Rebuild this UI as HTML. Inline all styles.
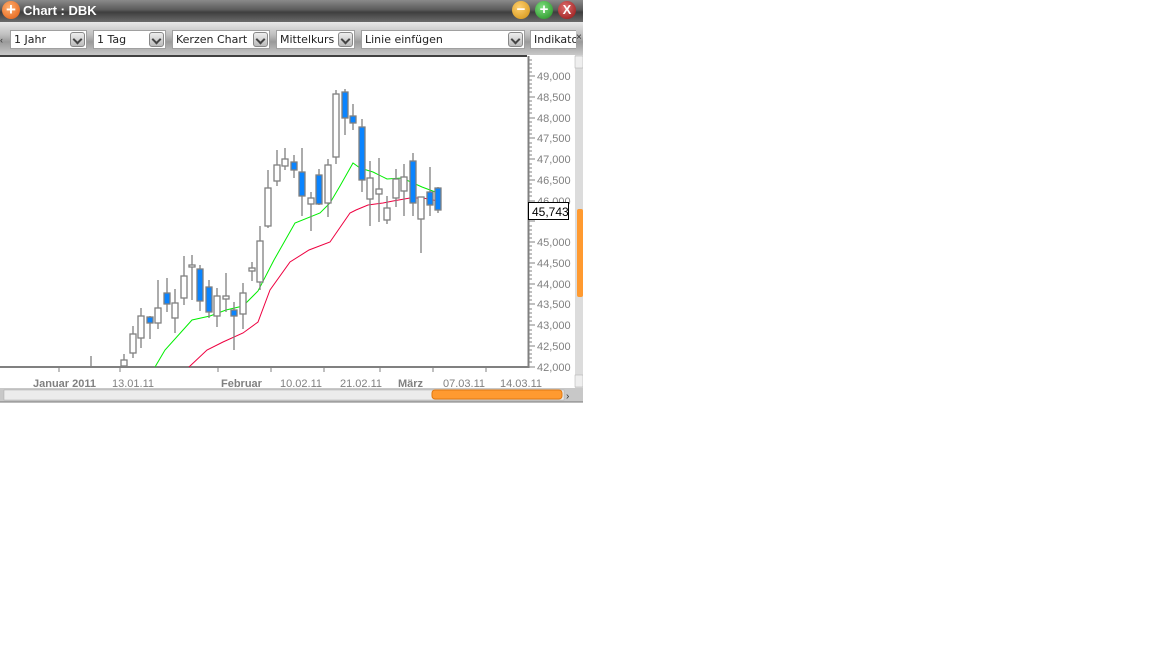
<!DOCTYPE html>
<html><head><meta charset="utf-8"><style>
*{margin:0;padding:0;box-sizing:border-box}
body{width:1152px;height:648px;background:#fff;position:relative;overflow:hidden;font-family:"Liberation Sans",sans-serif}
.title{position:absolute;left:0;top:0;width:583px;height:22px;background:linear-gradient(#8a8a8a,#5a5a5a 45%,#3e3e3e 55%,#6a6a6a);}
.title span{position:absolute;left:23px;top:3px;color:#fff;font-weight:bold;font-size:13px}
.tb{position:absolute;left:0;top:22px;width:583px;height:33px;background:linear-gradient(#e8e8e8,#bdbdbd 40%,#9a9a9a 60%,#c8c8c8);}
.sel{position:absolute;top:8px;height:19px;background:#fff;border:1px solid #a0a0a0;font-family:"DejaVu Sans",sans-serif;font-size:11px;padding:2px 0 0 3px;color:#222;overflow:hidden;white-space:nowrap}
.sel b{position:absolute;right:1px;top:1px;width:15px;height:15px;border:1px solid #888;border-radius:3px;background:linear-gradient(#eee,#bbb);font-weight:normal}
.sel b:after{content:"";position:absolute;left:3px;top:3px;width:5px;height:5px;border-right:2px solid #444;border-bottom:2px solid #444;transform:rotate(45deg)}
.btn{position:absolute;top:1px;width:18px;height:18px;border-radius:50%;color:#fff;font-weight:bold;font-size:15px;line-height:17px;text-align:center}
</style></head><body>
<div class="title">
<div class="btn" style="left:2px;background:radial-gradient(circle at 40% 35%,#ffb070,#e05a10);font-size:17px">+</div>
<span>Chart : DBK</span>
<div class="btn" style="left:512px;background:radial-gradient(circle at 40% 35%,#ffd070,#d09010)">−</div>
<div class="btn" style="left:535px;background:radial-gradient(circle at 40% 35%,#7ee07e,#208a20)">+</div>
<div class="btn" style="left:558px;background:radial-gradient(circle at 40% 35%,#e07070,#901010);font-size:13px">X</div>
</div>
<div class="tb">
<div style="position:absolute;left:0;top:13px;font-size:9px;color:#333">‹</div>
<div class="sel" style="left:10px;width:77px">1 Jahr<b></b></div>
<div class="sel" style="left:93px;width:73px">1 Tag<b></b></div>
<div class="sel" style="left:172px;width:98px">Kerzen Chart<b></b></div>
<div class="sel" style="left:276px;width:79px">Mittelkurs<b></b></div>
<div class="sel" style="left:361px;width:164px">Linie einfügen<b></b></div>
<div class="sel" style="left:530px;width:46px;border-right:none">Indikatoren</div>
<div style="position:absolute;left:576px;top:10px;font-size:10px;color:#333">×</div>
</div>
<svg style="position:absolute;left:0;top:55px" width="583" height="348" viewBox="0 55 583 348" font-family="Liberation Sans, sans-serif">
<line x1="0" y1="56" x2="527" y2="56" stroke="#000" stroke-width="1.5"/>
<line x1="0" y1="367" x2="529" y2="367" stroke="#808080" stroke-width="2"/>
<line x1="528.5" y1="56" x2="528.5" y2="368" stroke="#808080" stroke-width="2"/>
<g stroke="#808080" stroke-width="1">
<path d="M529 60h3M529 64h3M529 68h3M529 72h3M529 80h3M529 84h3M529 88h3M529 92h3M529 101h3M529 105h3M529 109h3M529 113h3M529 122h3M529 126h3M529 130h3M529 134h3M529 143h3M529 147h3M529 151h3M529 155h3M529 164h3M529 168h3M529 172h3M529 176h3M529 184h3M529 188h3M529 192h3M529 196h3M529 205h3M529 209h3M529 213h3M529 217h3M529 226h3M529 230h3M529 234h3M529 238h3M529 246h3M529 250h3M529 254h3M529 258h3M529 267h3M529 271h3M529 275h3M529 279h3M529 288h3M529 292h3M529 296h3M529 300h3M529 309h3M529 313h3M529 317h3M529 321h3M529 330h3M529 334h3M529 338h3M529 342h3M529 350h3M529 354h3M529 358h3M529 362h3"/>
<path d="M529 76h6M529 97h6M529 118h6M529 138h6M529 159h6M529 180h6M529 201h6M529 221h6M529 242h6M529 263h6M529 284h6M529 304h6M529 325h6M529 346h6M529 367h6"/>
<path d="M59 367v5M120 367v5M218 367v5M271 367v5M324 367v5M380 367v5M433 367v5M486 367v5"/>
</g>
<g fill="#808080" font-size="11">
<text x="537" y="80">49,000</text><text x="537" y="101">48,500</text><text x="537" y="122">48,000</text><text x="537" y="142">47,500</text><text x="537" y="163">47,000</text><text x="537" y="184">46,500</text><text x="537" y="205">46,000</text><text x="537" y="246">45,000</text><text x="537" y="267">44,500</text><text x="537" y="288">44,000</text><text x="537" y="308">43,500</text><text x="537" y="329">43,000</text><text x="537" y="350">42,500</text><text x="537" y="371">42,000</text>
<text x="33" y="387" font-weight="bold">Januar 2011</text><text x="112" y="387">13.01.11</text><text x="221" y="387" font-weight="bold">Februar</text><text x="280" y="387">10.02.11</text><text x="340" y="387">21.02.11</text><text x="398" y="387" font-weight="bold">März</text><text x="443" y="387">07.03.11</text><text x="500" y="387">14.03.11</text>
</g>
<rect x="528.5" y="202.5" width="40" height="17" fill="#fff" stroke="#000"/>
<text x="532" y="216" font-size="12" fill="#000">45,743</text>
<polyline fill="none" stroke="#00ee00" stroke-width="1" points="155,367 165,350 192,320 210,316 226,310 243,306 258,291 274,260 295,223 320,213 330,203 340,186 353,163 360,168 373,172 387,179 402,178 422,187 438,193"/>
<polyline fill="none" stroke="#ee0040" stroke-width="1" points="189,367 207,350 223,342 243,333 258,322 270,290 290,262 309,250 330,242 350,213 356,210 368,205 383,203 393,201 410,198 423,198 438,201"/>
<g stroke="#808080" stroke-width="1.3">
<line x1="91" y1="356" x2="91" y2="366"/>
<!-- candles -->
<g fill="#fff">
<path d="M124 354V366M133 326V358M141 308V348M158 280V329M175 289V333M184 256V305M192 255V300M217 288V327M226 273V312M243 283V329M252 262V281M260 226V290M268 170V228M277 150V186M285 148V170M311 192V231M328 159V217M336 90V164M370 161V226M379 158V222M387 196V224M396 169V207M404 164V216M421 197V253"/>
<rect x="121" y="360" width="6" height="6"/><rect x="130" y="334" width="6" height="19"/><rect x="138" y="316" width="6" height="22"/><rect x="155" y="308" width="6" height="15"/><rect x="172" y="303" width="6" height="15"/><rect x="181" y="276" width="6" height="22"/><rect x="189" y="265" width="6" height="2"/><rect x="214" y="296" width="6" height="20"/><rect x="223" y="296" width="6" height="3"/><rect x="240" y="293" width="6" height="21"/><rect x="249" y="268" width="6" height="3"/><rect x="257" y="241" width="6" height="41"/><rect x="265" y="188" width="6" height="38"/><rect x="274" y="165" width="6" height="16"/><rect x="282" y="159" width="6" height="7"/><rect x="308" y="198" width="6" height="6"/><rect x="325" y="165" width="6" height="38"/><rect x="333" y="94" width="6" height="63"/><rect x="367" y="178" width="6" height="21"/><rect x="376" y="189" width="6" height="5"/><rect x="384" y="208" width="6" height="12"/><rect x="393" y="179" width="6" height="19"/><rect x="401" y="177" width="6" height="14"/><rect x="418" y="197" width="6" height="22"/>
</g>
<g fill="#0a84ff">
<path d="M150 316V339M167 278V312M200 265V311M209 280V318M234 302V350M294 155V178M302 148V216M319 169V205M345 89V135M353 104V130M362 119V192M413 153V216M430 167V216M438 187V213"/>
<rect x="147" y="317" width="6" height="6"/><rect x="164" y="293" width="6" height="11"/><rect x="197" y="269" width="6" height="32"/><rect x="206" y="287" width="6" height="25"/><rect x="231" y="310" width="6" height="6"/><rect x="291" y="162" width="6" height="8"/><rect x="299" y="172" width="6" height="24"/><rect x="316" y="175" width="6" height="29"/><rect x="342" y="92" width="6" height="26"/><rect x="350" y="116" width="6" height="7"/><rect x="359" y="127" width="6" height="53"/><rect x="410" y="161" width="6" height="42"/><rect x="427" y="192" width="6" height="13"/><rect x="435" y="188" width="6" height="22"/>
</g>
</g>
<!-- vertical scrollbar -->
<rect x="575" y="55" width="8" height="333" fill="#dcdcdc"/>
<rect x="575" y="56" width="8" height="12" fill="#eee" stroke="#aaa" stroke-width="0.5"/>
<rect x="575" y="375" width="8" height="12" fill="#eee" stroke="#aaa" stroke-width="0.5"/>
<rect x="577" y="209" width="6" height="88" rx="2" fill="#ff9a30"/>
<!-- horizontal scrollbar -->
<rect x="0" y="388" width="583" height="14" fill="#c8c8c8"/>
<rect x="4" y="390" width="560" height="10" fill="#ececec" stroke="#aaa" stroke-width="0.5"/>
<rect x="432" y="390" width="130" height="9" rx="3" fill="#ff9a30" stroke="#e07810"/>
<text x="566" y="399" font-size="10" fill="#333">›</text>
<line x1="0" y1="402" x2="583" y2="402" stroke="#777"/>
</svg>
</body></html>
